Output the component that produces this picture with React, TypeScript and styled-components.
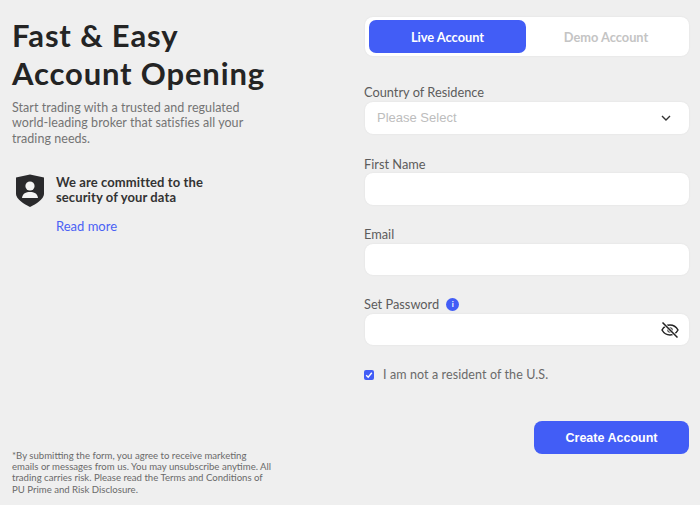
import { createGlobalStyle, styled } from "styled-components";

const GlobalStyle = createGlobalStyle`
  html, body {
    margin: 0;
    padding: 0;
    background: #efefef;
  }
  * {
    box-sizing: border-box;
  }
`

const Page = styled.div`
  width: 700px;
  height: 505px;
  padding: 17px 11px 10px 12px;
  display: flex;
  justify-content: space-between;
  background: #efefef;
  font-family: "Lato", sans-serif;
  overflow: hidden;
`

const Intro = styled.div`
  width: 275px;
  display: flex;
  flex-direction: column;
  justify-content: space-between;
`

const Heading = styled.h1`
  margin: -1px 0 0;
  font-size: 31px;
  line-height: 38px;
  font-weight: 700;
  color: #242424;
  letter-spacing: 0.85px;
`

const Lead = styled.p`
  margin: 7.5px 0 0;
  font-size: 12.5px;
  line-height: 15.5px;
  color: #747474;
  letter-spacing: 0.05px;
`

const Commitment = styled.div`
  margin-top: 27.5px;
  padding-left: 3px;
  display: flex;
  gap: 11px;
`

const ShieldIcon = styled.svg`
  width: 30px;
  height: 33px;
  flex: none;
`

const CommitmentText = styled.div`
  display: flex;
  flex-direction: column;
  padding-top: 1px;
`

const CommitmentTitle = styled.strong`
  font-size: 13px;
  line-height: 15.5px;
  font-weight: 700;
  color: #333;
  letter-spacing: 0.1px;
`

const ReadMore = styled.a`
  margin-top: 12.5px;
  font-size: 13px;
  line-height: 16px;
  color: #4a62f5;
`

const Disclaimer = styled.p`
  margin: 0;
  font-size: 9.6px;
  line-height: 11.3px;
  color: #6a6a6a;
`

const FormColumn = styled.div`
  width: 325px;
  display: flex;
  flex-direction: column;
`

const Tabs = styled.div`
  height: 39px;
  margin-left: 1px;
  padding: 3px 3px 3px 4px;
  display: grid;
  grid-template-columns: 157px 1fr;
  background: #fff;
  border-radius: 8px;
  box-shadow: 0 0 2px rgba(0, 0, 0, 0.08);
`

const Tab = styled.div<{ $active?: boolean }>`
  display: flex;
  align-items: center;
  justify-content: center;
  border-radius: 7px;
  font-size: 12.8px;
  font-weight: 700;
  color: ${(p) => (p.$active ? "#fff" : "#c4c4c4")};
  background: ${(p) => (p.$active ? "#425df6" : "transparent")};
`

const Field = styled.div<{ $top: number }>`
  margin-top: ${(p) => p.$top}px;
  display: flex;
  flex-direction: column;
`

const LabelRow = styled.div`
  height: 15px;
  display: flex;
  align-items: center;
  gap: 7px;
`

const Label = styled.label`
  font-size: 12.8px;
  line-height: 15px;
  color: #5c5c5c;
`

const InfoDot = styled.span`
  width: 13px;
  height: 13px;
  border-radius: 50%;
  background: #425df6;
  color: #fff;
  font-size: 8px;
  font-weight: 700;
  line-height: 13px;
  text-align: center;
`

const Control = styled.div<{ $gap: number; $height: number }>`
  margin: ${(p) => p.$gap}px 0 0 1px;
  height: ${(p) => p.$height}px;
  padding: 0 10px 0 12px;
  display: flex;
  align-items: center;
  justify-content: space-between;
  background: #fff;
  border-radius: 8px;
  box-shadow: 0 0 2px rgba(0, 0, 0, 0.08);
`

const Placeholder = styled.span`
  margin-top: -2px;
  font-family: "Liberation Sans", sans-serif;
  font-size: 13px;
  color: #bdbdbd;
`

const Chevron = styled.svg`
  margin-right: 8px;
`

const ResidentRow = styled.label`
  margin-top: 22px;
  height: 15px;
  display: flex;
  align-items: center;
  gap: 9px;
  font-size: 12.5px;
  color: #6a6a6a;
  letter-spacing: 0.1px;
`

const CheckBox = styled.span`
  width: 10px;
  height: 10px;
  display: flex;
  align-items: center;
  justify-content: center;
  background: #425df6;
  border-radius: 2px;
`

const Actions = styled.div`
  margin-top: 39px;
  display: flex;
  justify-content: flex-end;
`

const CreateButton = styled.button`
  width: 155px;
  height: 33px;
  border: none;
  border-radius: 8px;
  background: #425df6;
  color: #fff;
  font-family: "Liberation Sans", sans-serif;
  font-size: 12.5px;
  font-weight: 700;
`

export default function App() {
  return (
    <>
      <GlobalStyle />
      <Page>
        <Intro>
          <div>
            <Heading>
              Fast &amp; Easy
              <br />
              Account Opening
            </Heading>
            <Lead>
              Start trading with a trusted and regulated
              <br />
              world-leading broker that satisfies all your
              <br />
              trading needs.
            </Lead>
            <Commitment>
              <ShieldIcon viewBox="0 0 30 33">
                <path
                  d="M15 0.5 L29 3.5 V20 C29 25 21 30 15 33 C9 30 1 25 1 20 V3.5 Z"
                  fill="#2a2a2c"
                />
                <circle cx="15" cy="12" r="4.6" fill="#f4f4f4" />
                <path d="M7 24 C7.5 19.5 11 18 15 18 C19 18 22.5 19.5 23 24 Z" fill="#f4f4f4" />
              </ShieldIcon>
              <CommitmentText>
                <CommitmentTitle>
                  We are committed to the
                  <br />
                  security of your data
                </CommitmentTitle>
                <ReadMore>Read more</ReadMore>
              </CommitmentText>
            </Commitment>
          </div>
          <Disclaimer>
            *By submitting the form, you agree to receive marketing
            <br />
            emails or messages from us. You may unsubscribe anytime. All
            <br />
            trading carries risk. Please read the Terms and Conditions of
            <br />
            PU Prime and Risk Disclosure.
          </Disclaimer>
        </Intro>
        <FormColumn>
          <Tabs>
            <Tab $active>Live Account</Tab>
            <Tab>Demo Account</Tab>
          </Tabs>
          <Field $top={29}>
            <LabelRow>
              <Label>Country of Residence</Label>
            </LabelRow>
            <Control $gap={2} $height={32}>
              <Placeholder>Please Select</Placeholder>
              <Chevron width="10" height="6" viewBox="0 0 10 6" fill="none">
                <path d="M1 1 L5 5 L9 1" stroke="#333" strokeWidth="1.4" />
              </Chevron>
            </Control>
          </Field>
          <Field $top={23}>
            <LabelRow>
              <Label>First Name</Label>
            </LabelRow>
            <Control $gap={1} $height={32} />
          </Field>
          <Field $top={22}>
            <LabelRow>
              <Label>Email</Label>
            </LabelRow>
            <Control $gap={2} $height={31} />
          </Field>
          <Field $top={22}>
            <LabelRow>
              <Label>Set Password</Label>
              <InfoDot>i</InfoDot>
            </LabelRow>
            <Control $gap={2} $height={31}>
              <span />
              <svg width="18" height="16" viewBox="0 0 18 16" fill="none" stroke="#222" strokeWidth="1.5">
                <path d="M1 8 C3 4.5 6 3 9 3 C12 3 15 4.5 17 8 C15 11.5 12 13 9 13 C6 13 3 11.5 1 8 Z" />
                <circle cx="9" cy="8" r="2.8" fill="#555" stroke="none" />
                <path d="M3 2 L15 14" stroke="#fff" strokeWidth="3" />
                <path d="M1.5 0.5 L16.5 15.5" />
              </svg>
            </Control>
          </Field>
          <ResidentRow>
            <CheckBox>
              <svg width="8" height="8" viewBox="0 0 8 8" fill="none">
                <path d="M1.2 4.2 L3.2 6.2 L6.8 1.8" stroke="#fff" strokeWidth="1.4" />
              </svg>
            </CheckBox>
            I am not a resident of the U.S.
          </ResidentRow>
          <Actions>
            <CreateButton>Create Account</CreateButton>
          </Actions>
        </FormColumn>
      </Page>
    </>
  );
}
